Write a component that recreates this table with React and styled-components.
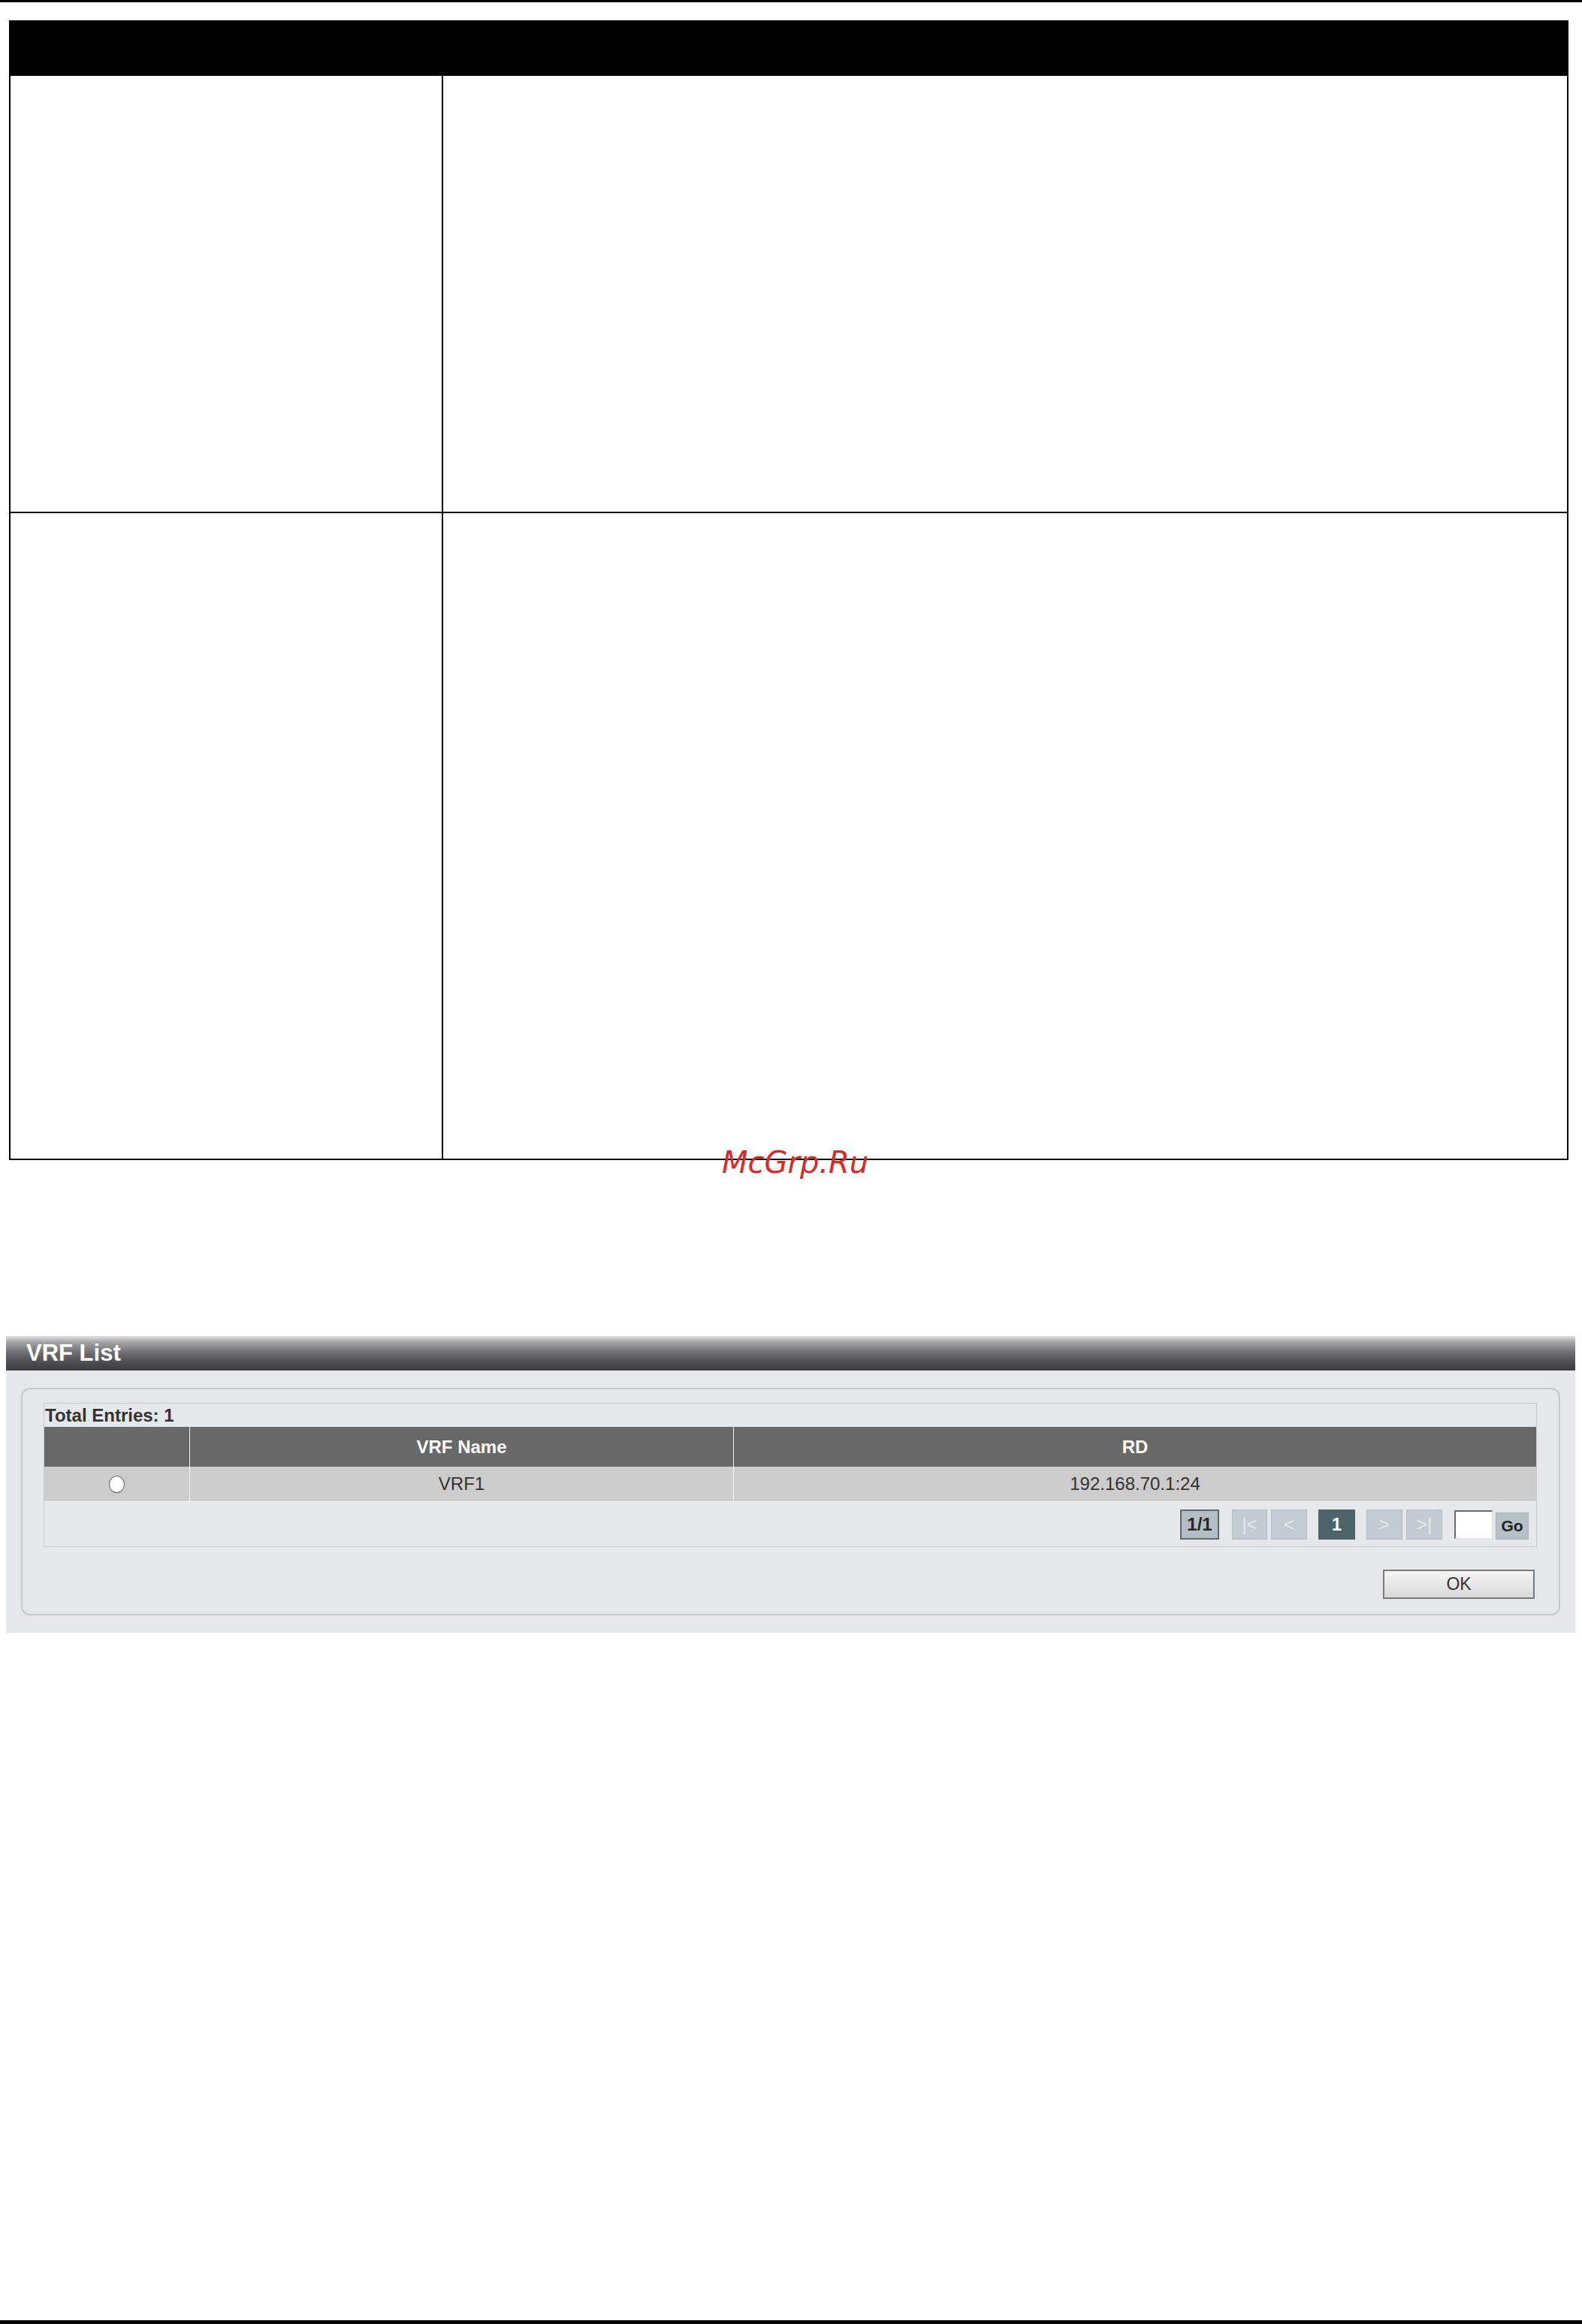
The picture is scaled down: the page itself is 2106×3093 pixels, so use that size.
import React from 'react'
import styled, { createGlobalStyle } from 'styled-components'

const GlobalStyle = createGlobalStyle`
    html, body {
        margin: 0;
        padding: 0;
        background: #ffffff;
    }
`

const Page = styled.div`
    position: relative;
    height: 3093px;
    display: flex;
    flex-direction: column;
    font-family: 'Liberation Sans', Arial, sans-serif;
`

const Rule = styled.div`
    height: ${props => props.thick}px;
    background: #000;
    flex-shrink: 0;
`

const BottomRule = styled(Rule)`
    margin-top: auto;
`

const ParamTable = styled.div`
    margin: 24px 0 0 12px;
    width: 2076px;
    box-sizing: border-box;
    display: grid;
    grid-template-columns: 574px 1fr;
    grid-template-rows: 70px 580px 859px;
    gap: 2px;
    border: 2px solid #000;
    background: #000;
`

const HeadCell = styled.div`
    grid-column: 1 / span 2;
    background: #000;
`

const Cell = styled.div`
    background: #fff;
`

const Watermark = styled.div`
    position: absolute;
    left: 961px;
    top: 1527px;
    font-family: 'DejaVu Sans', sans-serif;
    font-style: italic;
    font-size: 40px;
    line-height: 40px;
    color: #d52b2b;
    white-space: nowrap;
`

const Panel = styled.div`
    margin: 234px 0 0 8px;
    width: 2089px;
    background: #e4e8eb;
`

const TitleBar = styled.div`
    height: 46px;
    display: flex;
    align-items: center;
    padding-left: 27px;
    background: linear-gradient(#e2e2e2 0%, #a4a4a6 18%, #6c6c70 50%, #4a4a4f 80%, #3c3c41 100%);
    color: #fff;
    font-size: 31px;
    font-weight: bold;
`

const PanelBody = styled.div`
    padding: 23px 20px;
`

const Fieldset = styled.div`
    border: 2px solid #c3c9cc;
    border-radius: 12px;
    padding: 18px 29px 20px 28px;
    display: flex;
    flex-direction: column;
`

const ListBox = styled.div`
    border: 1px solid #c4cacd;
    display: flex;
    flex-direction: column;
`

const Entries = styled.div`
    height: 31px;
    display: flex;
    align-items: center;
    padding-left: 1px;
    font-size: 24px;
    font-weight: bold;
    color: #333;
`

const Grid = styled.div`
    display: grid;
    grid-template-columns: 193px 724px 1fr;
`

const Th = styled.div`
    height: 53px;
    display: flex;
    align-items: center;
    justify-content: center;
    background: #686868;
    color: #fff;
    font-size: 24px;
    font-weight: bold;
    border-left: ${props => (props.first ? 'none' : '1px solid #f4f4f4')};
`

const Td = styled.div`
    height: 46px;
    display: flex;
    align-items: center;
    justify-content: center;
    background: #cccccc;
    color: #333;
    font-size: 24px;
    border-left: ${props => (props.first ? 'none' : '1px solid #f4f4f4')};
`

const Radio = styled.span`
    width: 21px;
    height: 23px;
    border-radius: 50%;
    border: 1px solid #6e6e6e;
    background: radial-gradient(circle at 40% 40%, #ffffff 55%, #dcdcdc 100%);
    box-sizing: border-box;
`

const Pager = styled.div`
    height: 59px;
    display: flex;
    align-items: center;
    justify-content: flex-end;
    padding-right: 10px;
    border-top: 1px solid #f4f6f7;
`

const PageBtn = styled.div`
    width: ${props => props.w}px;
    height: 40px;
    margin-left: ${props => props.gap}px;
    box-sizing: border-box;
    display: flex;
    align-items: center;
    justify-content: center;
    font-size: 24px;
    font-weight: bold;
    ${props => {
        switch (props.kind) {
            case 'count':
                return 'background: #b3bfc3; border: 2px solid #5f6a6e; color: #2a2a2a;'
            case 'active':
                return 'background: #4d6367; border: 1px solid #4d6367; color: #ffffff;'
            default:
                return 'background: #c3ccd0; border: 1px solid #b3bcc0; color: #e6ebed; font-weight: normal;'
        }
    }}
`

const GoInput = styled.div`
    width: 51px;
    height: 38px;
    margin-left: 16px;
    box-sizing: border-box;
    background: #fff;
    border-top: 2px solid #6a6a6a;
    border-left: 2px solid #6a6a6a;
    border-right: 1px solid #e0e0e0;
    border-bottom: 1px solid #e0e0e0;
`

const GoBtn = styled.div`
    width: 44px;
    height: 36px;
    margin-left: 4px;
    margin-top: 4px;
    display: flex;
    align-items: center;
    justify-content: center;
    background: #b5c1c5;
    border: 1px solid #a7b2b6;
    box-sizing: border-box;
    color: #222;
    font-size: 21px;
    font-weight: bold;
`

const OkButton = styled.div`
    align-self: flex-end;
    margin: 30px 3px 0 0;
    width: 202px;
    height: 39px;
    box-sizing: border-box;
    border: 2px solid #7a7a7a;
    background: linear-gradient(#f6f6f6, #d8d8d8);
    display: flex;
    align-items: center;
    justify-content: center;
    color: #333;
    font-size: 23px;
`

const pages = [
    { label: '1/1', w: 52, gap: 0, kind: 'count' },
    { label: '|<', w: 47, gap: 17 },
    { label: '<', w: 48, gap: 5 },
    { label: '1', w: 49, gap: 15, kind: 'active' },
    { label: '>', w: 48, gap: 15 },
    { label: '>|', w: 48, gap: 5 }
]

export default function App() {
    return (
        <Page>
            <GlobalStyle />
            <Rule thick={3} />
            <ParamTable>
                <HeadCell />
                <Cell />
                <Cell />
                <Cell />
                <Cell />
            </ParamTable>
            <Watermark>McGrp.Ru</Watermark>
            <Panel>
                <TitleBar>VRF List</TitleBar>
                <PanelBody>
                    <Fieldset>
                        <ListBox>
                            <Entries>Total Entries: 1</Entries>
                            <Grid>
                                <Th first />
                                <Th>VRF Name</Th>
                                <Th>RD</Th>
                                <Td first>
                                    <Radio />
                                </Td>
                                <Td>VRF1</Td>
                                <Td>192.168.70.1:24</Td>
                            </Grid>
                            <Pager>
                                {pages.map(p => (
                                    <PageBtn key={p.label} w={p.w} gap={p.gap} kind={p.kind}>
                                        {p.label}
                                    </PageBtn>
                                ))}
                                <GoInput />
                                <GoBtn>Go</GoBtn>
                            </Pager>
                        </ListBox>
                        <OkButton>OK</OkButton>
                    </Fieldset>
                </PanelBody>
            </Panel>
            <BottomRule thick={5} />
        </Page>
    )
}
